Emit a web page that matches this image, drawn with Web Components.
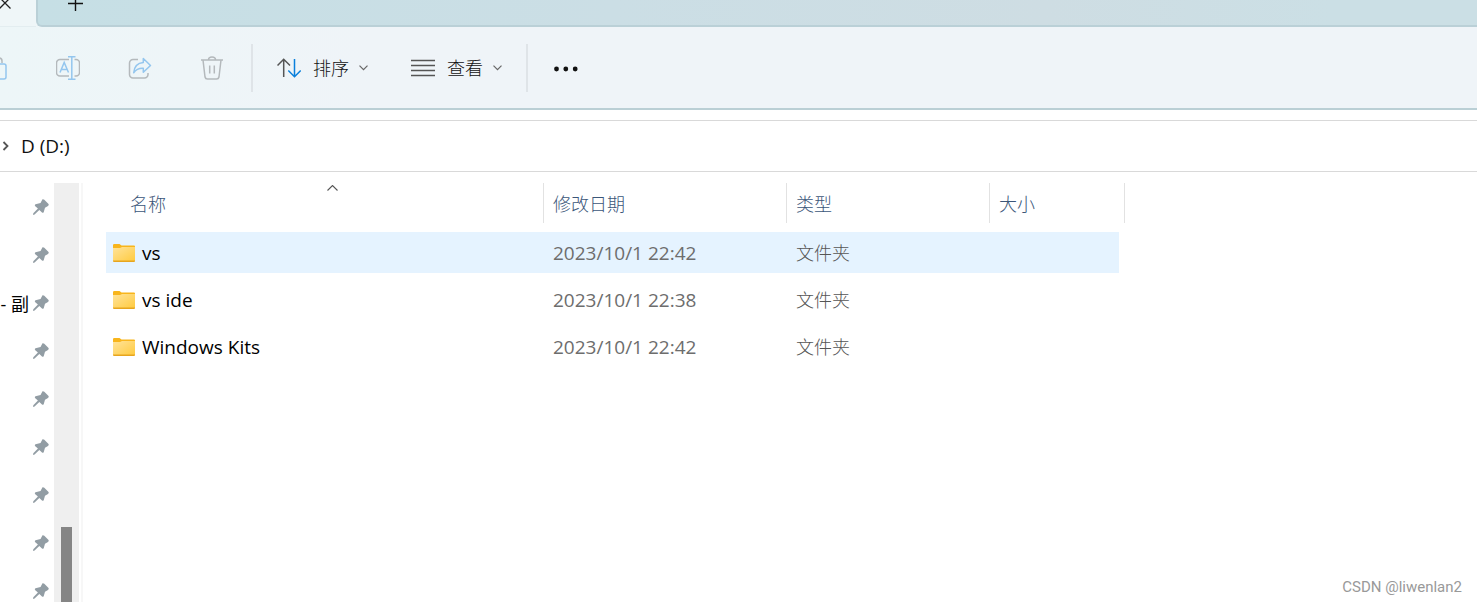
<!DOCTYPE html>
<html lang="zh-CN">
<head>
<meta charset="utf-8">
<title>D (D:)</title>
<style>
    html, body { height: 100%; }
    body {
        margin: 0;
        overflow: hidden;
        background: #fff;
        color: #000;
        font-family: "Open Sans", "Noto Sans CJK SC", sans-serif;
        font-size: 18px;
    }
</style>
</head>
<body>
<file-explorer></file-explorer>
<script>
const icons = {
    close: { w: 14, h: 14, body: '<path d="M1.5 1.5l11 11M12.5 1.5l-11 11" stroke="#222" stroke-width="1.3"/>' },
    plus: { w: 15, h: 15, body: '<path d="M7.5 0v15M0 7.5h15" stroke="#111" stroke-width="1.4"/>' },
    paste: { w: 24, h: 24, body: `
        <path d="M5 8V4a2 2 0 0 1 2-2h8a3 3 0 0 1 3 3v2" stroke="#b4b9bc"/>
        <rect x="8" y="8" width="14" height="15" rx="2" stroke="#94c6ee"/>` },
    rename: { w: 24, h: 24, body: `
        <path d="M13 3.5H4a3.5 3.5 0 0 0-3.500 3.5v9.5a3.5 3.5 0 0 0 3.5 3.5h9M18.5 3.5H20a3.5 3.5 0 0 1 3.5 3.5v9.5a3.5 3.5 0 0 1-3.500 3.5h-1.500" stroke="#b4b9bc"/>
        <path d="M4 16.5L8.2 6.5l4.3 10M5.5 13.5h5.5M12 .7h7.5M12 23.3h7.5M15.8 .7v22.6" stroke="#94c6ee"/>` },
    share: { w: 24, h: 24, body: `
        <path d="M10 3.5H5A3.5 3.5 0 0 0 1.5 7v11.5A3.5 3.5 0 0 0 5 22h11.5a3.5 3.5 0 0 0 3.5-3.500v-1.500" stroke="#b4b9bc"/>
        <path d="M15.3 2.5l7.2 7-7.200 6.8v-4c-4.300-.3-7.300 1.2-9.600 4.4.5-6 3.6-9.800 9.6-10.300z" stroke="#94c6ee" stroke-linejoin="round"/>` },
    trash: { w: 24, h: 24, body: `
        <path d="M1 4h22M8.5 4c0-4 7-4 7 0M3 4l2 17a2.5 2.5 0 0 0 2.5 2h9a2.5 2.5 0 0 0 2.5-2L21 4M9.7 9.5v8M14.3 9.5v8" stroke="#b4b9bc"/>` },
    sort: { w: 24, h: 24, body: `
        <path d="M6.7 21V3.5M.5 9.5l6.2-6.300 6.3 6.3" stroke="#555" />
        <path d="M17.5 3v17.5M11.3 14.5l6.2 6.2 6.2-6.200" stroke="#0a80dc"/>` },
    view: { w: 24, h: 24, body: '<path d="M0 4.5h24M0 9.5h24M0 14.5h24M0 19.5h24" stroke="#555"/>' },
    more: { w: 24, h: 24, body: '<g fill="#111"><circle cx="2.5" cy="13" r="2.4"/><circle cx="11.8" cy="13" r="2.4"/><circle cx="21.2" cy="13" r="2.4"/></g>' },
    down: { w: 9, h: 6, body: '<path d="M.5 .7l4 4 4-4" stroke="#666" stroke-width="1.2"/>' },
    up: { w: 11, h: 6, body: '<path d="M.5 5.5l5-5 5 5" stroke="#555" stroke-width="1.1"/>' },
    right: { w: 7, h: 10, body: '<path d="M1.5 1l4 4-4 4" stroke="#555" stroke-width="1.8"/>' },
    pin: { w: 16, h: 16, body: '<path d="M9.5 .3Q10.5 0 11.3 .8L15.3 4.7Q16.3 5.8 15 6.9L12 8.7 10.7 13.3Q9.8 14.200 9 13.5L6.3 11 1.6 15.6 0 15.9.3 14.3 4.9 9.6 2 7Q1.5 6 2.5 5.2L7.5 4z" fill="#929da4"/>' },
    folder: { w: 22, h: 18, body: `
        <defs><linearGradient id="g" x1="0" y1="0" x2="1" y2="1"><stop offset="0" stop-color="#ffe39a"/><stop offset="1" stop-color="#ffcb40"/></linearGradient></defs>
        <path d="M0 1.2Q0 0 1.2 0h5.3L8.5 1.5H21Q22 1.5 22 2.5V8H0z" fill="#f8b51c"/>
        <path d="M0 4h7l2-1h13v14H0z" fill="url(#g)"/>
        <path d="M0 16.5h22V17q0 1-1 1H1q-1 0-1-1z" fill="#e7a51e"/>` }
};

class UiIcon extends HTMLElement {
    connectedCallback() {
        const icon = icons[this.getAttribute('name')];
        this.attachShadow({ mode: 'open' }).innerHTML = `
            <style>
                :host { display: inline-flex; flex: none; }
                svg { display: block; }
            </style>
            <svg width="${icon.w}" height="${icon.h}" viewBox="0 0 ${icon.w} ${icon.h}" fill="none" stroke-width="1.5" aria-hidden="true">${icon.body}</svg>
        `;
    }
}

class TabStrip extends HTMLElement {
    connectedCallback() {
        this.attachShadow({ mode: 'open' }).innerHTML = `
            <style>
                :host { display: flex; height: 27px; background: #eff6f8; }
                button {
                    display: flex;
                    padding: 0;
                    border: 0;
                    background: none;
                }
                .tab {
                    box-sizing: border-box;
                    width: 36px;
                    border-bottom: 1px solid #e3edf0;
                }
                .tab button { margin: -4px 0 0 -2px; }
                .rest {
                    flex: 1;
                    border-left: 2px solid #bad0d7;
                    border-bottom: 2px solid #bad0d7;
                    border-bottom-left-radius: 6px;
                    background: linear-gradient(90deg, #c6dfe5, #cbdee5 40%, #cedde3 70%, #cbdfe5 90%);
                }
                .rest button { margin: -4px 0 0 30px; }
            </style>
            <div class="tab"><button aria-label="关闭标签页"><ui-icon name="close"></ui-icon></button></div>
            <div class="rest"><button aria-label="新建标签页"><ui-icon name="plus"></ui-icon></button></div>
        `;
    }
}

class CommandButton extends HTMLElement {
    connectedCallback() {
        const menu = this.hasAttribute('menu');
        const label = this.getAttribute('label');
        this.attachShadow({ mode: 'open' }).innerHTML = `
            <style>
                :host { display: flex; }
                button {
                    display: flex;
                    align-items: center;
                    justify-content: center;
                    width: 72px;
                    padding: 0;
                    border: 0;
                    background: none;
                    color: #111;
                    font: inherit;
                    line-height: 24px;
                }
                button.menu { width: auto; padding: 0 21px 0 22px; }
                .text { margin: 0 10px 0 12px; }
            </style>
            <button ${menu ? 'class="menu"' : `aria-label="${label}"`} ${this.hasAttribute('disabled') ? 'disabled' : ''}>
                <ui-icon name="${this.getAttribute('icon')}"></ui-icon>
                ${menu ? '<span class="text"><slot></slot></span><ui-icon name="down"></ui-icon>' : ''}
            </button>
        `;
    }
}

class CommandBar extends HTMLElement {
    connectedCallback() {
        this.attachShadow({ mode: 'open' }).innerHTML = `
            <style>
                :host {
                    display: flex;
                    height: 81px;
                    background: linear-gradient(90deg, #edf6f8, #eff4f8 25%);
                    border-bottom: 2px solid #bacfd5;
                    font-weight: 300;
                }
                .bar { display: flex; margin-left: -40px; }
                .line {
                    align-self: center;
                    width: 2px;
                    height: 48px;
                    margin: 0 2px 0 3px;
                    background: #dfe4e8;
                }
            </style>
            <div class="bar">
                <command-button icon="paste" label="粘贴" disabled></command-button>
                <command-button icon="rename" label="重命名" disabled></command-button>
                <command-button icon="share" label="共享" disabled></command-button>
                <command-button icon="trash" label="删除" disabled></command-button>
                <span class="line"></span>
                <command-button icon="sort" menu>排序</command-button>
                <command-button icon="view" menu>查看</command-button>
                <span class="line"></span>
                <command-button icon="more" label="查看更多"></command-button>
            </div>
        `;
    }
}

class AddressBar extends HTMLElement {
    connectedCallback() {
        this.attachShadow({ mode: 'open' }).innerHTML = `
            <style>
                :host {
                    display: flex;
                    align-items: center;
                    gap: 12px;
                    height: 50px;
                    margin-top: 10px;
                    padding-left: 2px;
                    border: solid #d9d9d9;
                    border-width: 1px 0;
                    font-size: 19px;
                }
                a { color: #111; text-decoration: none; line-height: 24px; }
            </style>
            <ui-icon name="right"></ui-icon>
            <a href="#"><slot></slot></a>
        `;
    }
}

class QuickAccess extends HTMLElement {
    connectedCallback() {
        const items = ['', '', '- 副', '', '', '', '', '', ''];
        this.attachShadow({ mode: 'open' }).innerHTML = `
            <style>
                :host { display: flex; overflow: hidden; }
                ul {
                    flex: none;
                    width: 54px;
                    margin: 0;
                    padding: 0;
                    list-style: none;
                }
                a {
                    display: flex;
                    align-items: center;
                    justify-content: flex-end;
                    gap: 4px;
                    height: 48px;
                    padding-right: 5px;
                    color: #000;
                    text-decoration: none;
                    white-space: nowrap;
                }
                .track {
                    display: flex;
                    flex-direction: column;
                    align-items: center;
                    width: 25px;
                    background: #efefef;
                }
                .space { flex: 344; }
                .thumb { flex: 75; width: 11px; background: #858585; }
            </style>
            <ul>${items.map(text => `<li><a href="#" ${text ? '' : 'aria-label="已固定"'}>${text}<ui-icon name="pin"></ui-icon></a></li>`).join('')}</ul>
            <div class="track"><span class="space"></span><span class="thumb"></span></div>
        `;
    }
}

class FileList extends HTMLElement {
    constructor() {
        super();
        this.attachShadow({ mode: 'open' });
        this.files = [
            { name: 'vs', date: '2023/10/1 22:42', type: '文件夹' },
            { name: 'vs ide', date: '2023/10/1 22:38', type: '文件夹' },
            { name: 'Windows Kits', date: '2023/10/1 22:42', type: '文件夹' }
        ];
        this.selected = 0;
    }

    connectedCallback() {
        this.render();
    }

    render() {
        this.shadowRoot.innerHTML = `
            <style>
                :host { display: block; }
                table { border-collapse: separate; border-spacing: 0; table-layout: fixed; width: 1019px; }
                .name { width: 438px; }
                .date { width: 243px; }
                .type { width: 203px; }
                th { padding: 0 0 6px; font-weight: 300; text-align: left; }
                .head {
                    display: flex;
                    align-items: center;
                    box-sizing: border-box;
                    height: 40px;
                    padding-left: 9px;
                    border-right: 1px solid #e2e2e2;
                    color: #3b5679;
                }
                .name .head { position: relative; padding-left: 24px; }
                .head ui-icon { position: absolute; top: 2px; left: 221px; }
                td {
                    height: 41px;
                    padding: 0 0 0 9px;
                    border: solid transparent;
                    border-width: 3px 0;
                    background-clip: padding-box;
                    color: #6d6d6d;
                    font-size: 19px;
                    line-height: 24px;
                }
                td.type { color: #555; font-size: 18px; font-weight: 300; }
                td.name { padding-left: 7px; color: #000; }
                td.size { border-right-width: 6px; }
                .file { display: flex; align-items: center; gap: 7px; }
                tr.selected td { background-color: #e5f3ff; }
            </style>
            <table>
                <thead>
                    <tr>
                        <th class="name"><div class="head">名称<ui-icon name="up"></ui-icon></div></th>
                        <th class="date"><div class="head">修改日期</div></th>
                        <th class="type"><div class="head">类型</div></th>
                        <th class="size"><div class="head">大小</div></th>
                    </tr>
                </thead>
                <tbody>
                    ${this.files.map((file, i) => `
                    <tr class="${i === this.selected ? 'selected' : ''}">
                        <td class="name"><div class="file"><ui-icon name="folder"></ui-icon><span>${file.name}</span></div></td>
                        <td class="date">${file.date}</td>
                        <td class="type">${file.type}</td>
                        <td class="size"></td>
                    </tr>`).join('')}
                </tbody>
            </table>
        `;
    }
}

class FileExplorer extends HTMLElement {
    connectedCallback() {
        this.attachShadow({ mode: 'open' }).innerHTML = `
            <style>
                :host { display: flex; flex-direction: column; height: 100%; }
                tab-strip, command-bar, address-bar { flex: none; }
                main { display: flex; flex: 1; min-height: 0; padding-top: 11px; }
                quick-access { flex: none; }
                file-list { flex: 1; margin-left: 2px; padding-left: 23px; border-left: 2px solid #f7f7f7; }
                .mark {
                    position: absolute;
                    right: 15px;
                    bottom: 5px;
                    color: #999;
                    font: 15px/20px Roboto, sans-serif;
                }
            </style>
            <tab-strip></tab-strip>
            <command-bar></command-bar>
            <address-bar>D (D:)</address-bar>
            <main>
                <quick-access></quick-access>
                <file-list></file-list>
            </main>
            <span class="mark">CSDN @liwenlan2</span>
        `;
    }
}

customElements.define('ui-icon', UiIcon);
customElements.define('tab-strip', TabStrip);
customElements.define('command-button', CommandButton);
customElements.define('command-bar', CommandBar);
customElements.define('address-bar', AddressBar);
customElements.define('quick-access', QuickAccess);
customElements.define('file-list', FileList);
customElements.define('file-explorer', FileExplorer);
</script>
</body>
</html>
